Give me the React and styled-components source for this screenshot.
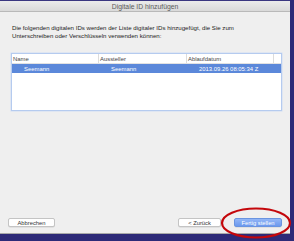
import React from 'react';
import styled, { createGlobalStyle } from 'styled-components';

const Global = createGlobalStyle`
  html, body { margin: 0; padding: 0; background: #2d2a78; }
  body { font-family: 'Liberation Sans', Arial, sans-serif; }
`;

const Frame = styled.div`
  width: 294px;
  height: 241px;
  background: #2d2a78;
  position: relative;
  overflow: hidden;
`;

const Window = styled.div`
  width: 290px;
  height: 234px;
  background: #efefef;
  display: flex;
  flex-direction: column;
  border-top: 1px solid #3a3680;
  box-sizing: border-box;
  border-bottom: 1px solid #a9a9a9;
`;

const TitleBar = styled.div`
  height: 10px;
  background: linear-gradient(#ebebeb, #d9d9d9);
  border-bottom: 1px solid #b9b9b9;
  display: flex;
  align-items: center;
  justify-content: center;
  font-size: 6.8px;
  color: #5a5a5a;
`;

const Content = styled.div`
  flex: 1;
  display: flex;
  flex-direction: column;
  padding: 12px 8px 6px 12px;
`;

const Message = styled.p`
  margin: 0;
  font-size: 6.1px;
  line-height: 7.5px;
  color: #1c1c1c;
`;

const Table = styled.div`
  margin: 14px 0 0 -1px;
  width: 271px;
  height: 58px;
  box-sizing: border-box;
  background: #fff;
  border: 1px solid #b5cbef;
  box-shadow: 0 0 0 0.5px #cfddf5;
  display: flex;
  flex-direction: column;
`;

const Row = styled.div`
  display: grid;
  grid-template-columns: 87px 88px 87px 1fr;
  height: 9px;
  align-items: center;
  font-size: 5.9px;
  color: ${p => (p.$selected ? '#ffffff' : '#444')};
  background: ${p => (p.$selected ? '#5b88da' : 'transparent')};
  border-bottom: ${p => (p.$head ? '1px solid #e2e2e2' : 'none')};
`;

const Cell = styled.div`
  height: 100%;
  display: flex;
  align-items: center;
  padding-left: ${p => p.$pad || 1}px;
  border-right: ${p => (p.$line ? '1px solid #dcdcdc' : 'none')};
  white-space: nowrap;
`;

const Footer = styled.div`
  margin-top: auto;
  display: flex;
  align-items: center;
`;

const Button = styled.div`
  height: 9px;
  width: ${p => p.$w}px;
  margin-left: ${p => p.$ml || 0}px;
  box-sizing: border-box;
  border-radius: 2px;
  display: flex;
  align-items: center;
  justify-content: center;
  font-size: 5.8px;
  color: ${p => (p.$primary ? '#ffffff' : '#333')};
  background: ${p => (p.$primary ? 'linear-gradient(#93b6f6, #6c99ee)' : '#ffffff')};
  border: 0.5px solid ${p => (p.$primary ? '#6a94e0' : '#c4c4c4')};
  box-shadow: 0 0.5px 0.5px rgba(0, 0, 0, 0.12);
`;

const Ring = styled.svg`
  position: absolute;
  left: 220px;
  top: 206px;
  width: 72px;
  height: 34px;
`;

export default function App() {
  return (
    <Frame>
      <Global />
      <Window>
        <TitleBar>Digitale ID hinzufügen</TitleBar>
        <Content>
          <Message>
            Die folgenden digitalen IDs werden der Liste digitaler IDs hinzugefügt, die Sie zum
            <br />
            Unterschreiben oder Verschlüsseln verwenden können:
          </Message>
          <Table>
            <Row $head>
              <Cell $line>Name</Cell>
              <Cell $line>Aussteller</Cell>
              <Cell $line>Ablaufdatum</Cell>
              <Cell />
            </Row>
            <Row $selected>
              <Cell $pad={12}>Seemann</Cell>
              <Cell $pad={12}>Seemann</Cell>
              <Cell $pad={12}>2013.09.26 08:05:34 Z</Cell>
              <Cell />
            </Row>
          </Table>
          <Footer>
            <Button $w={47} $ml={-4}>Abbrechen</Button>
            <Button $w={43} $ml={123}>&lt; Zurück</Button>
            <Button $w={48} $ml={13} $primary>Fertig stellen</Button>
          </Footer>
        </Content>
      </Window>
      <Ring viewBox="0 0 72 34">
        <ellipse cx="36" cy="17" rx="34" ry="14.5" fill="none" stroke="#c4070b" strokeWidth="2.2" />
      </Ring>
    </Frame>
  );
}
